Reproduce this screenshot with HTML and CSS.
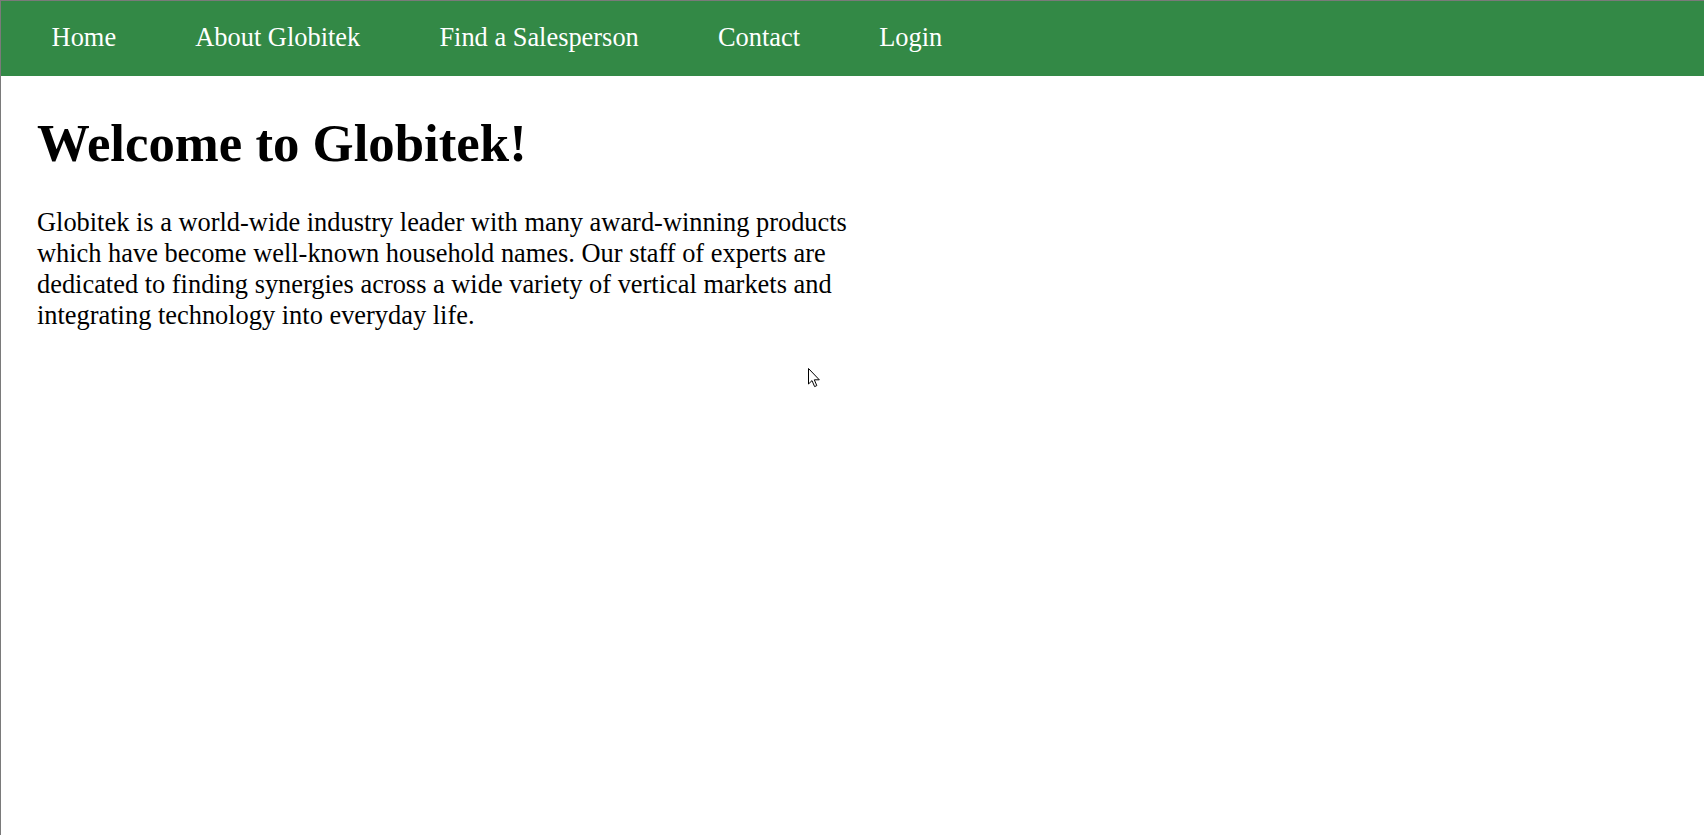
FILE: index.html
```html
<!DOCTYPE html>
<html lang="en">
<head>
<meta charset="utf-8">
<title>Globitek</title>
<link rel="stylesheet" href="styles.css">
</head>
<body>
<div class="window">
  <nav class="topnav">
    <a class="nav-link" href="#">Home</a>
    <a class="nav-link" href="#">About Globitek</a>
    <a class="nav-link" href="#">Find a Salesperson</a>
    <a class="nav-link" href="#">Contact</a>
    <a class="nav-link" href="#">Login</a>
  </nav>
  <main class="content">
    <h1 class="title">Welcome to Globitek!</h1>
    <p class="intro">Globitek is a world-wide industry leader with many award-winning products which have become well-known household names. Our staff of experts are dedicated to finding synergies across a wide variety of vertical markets and integrating technology into everyday life.</p>
  </main>
  <svg class="cursor" width="13" height="20" viewBox="0 0 13 20" aria-hidden="true">
    <path d="M0.5 0.5 L0.5 16 L4 12.6 L6.6 18.6 L8.8 17.6 L6.3 11.8 L11.3 11.8 Z" fill="#fff" stroke="#000" stroke-width="1" stroke-linejoin="miter"/>
  </svg>
</div>
</body>
</html>
```

FILE: styles.css
```css
html, body {
  margin: 0;
  padding: 0;
  background: #ffffff;
}

body {
  font-family: "Liberation Serif", "Times New Roman", serif;
  font-size: 26.4px;
  color: #000;
}

.window {
  position: relative;
  box-sizing: border-box;
  min-height: 100vh;
  border-top: 1px solid #7a7a7a;
  border-left: 1px solid #7a7a7a;
}

.topnav {
  display: flex;
  background: #338946;
  padding: 21.4px 0 22.6px 11px;
}

.nav-link {
  color: #ffffff;
  text-decoration: none;
  padding: 0 39.6px;
}

.content {
  padding: 0 0 0 36px;
}

.title {
  font-size: 52.8px;
  font-weight: bold;
  margin: 36.6px 0 34.8px 0;
}

.intro {
  max-width: 850px;
  margin: 0;
  line-height: 31px;
}

.cursor {
  position: absolute;
  left: 807px;
  top: 367px;
}
```
